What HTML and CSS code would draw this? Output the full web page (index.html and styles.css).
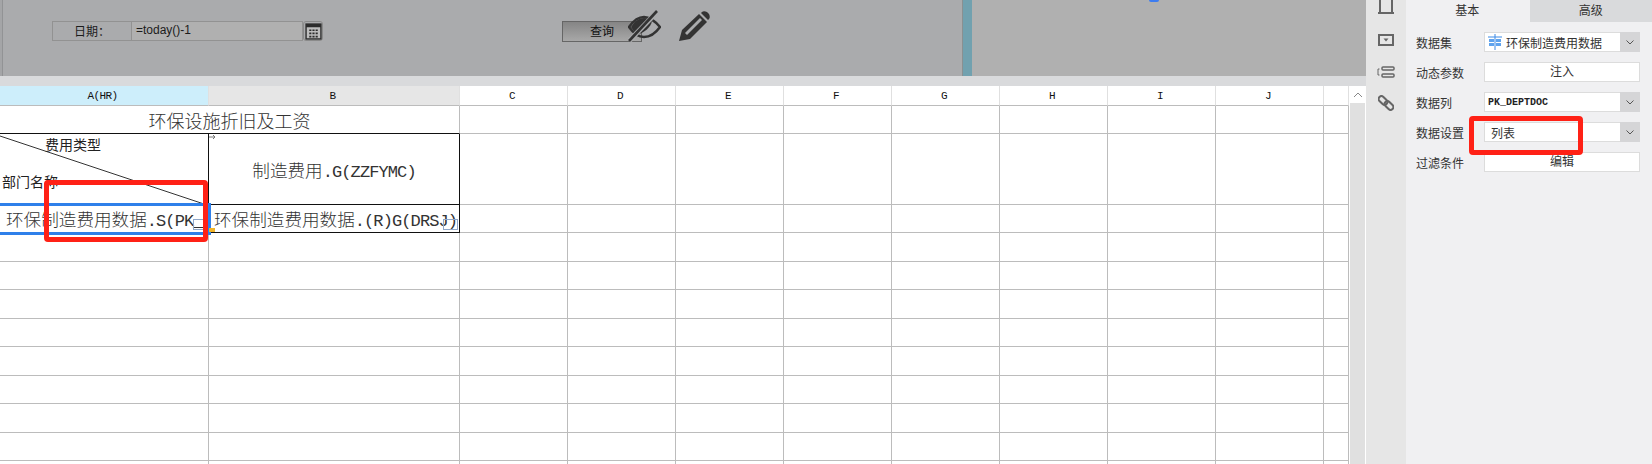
FILE: index.html
```html
<!DOCTYPE html>
<html lang="zh-CN">
<head>
  <meta charset="UTF-8">
  <title>环保设施折旧及工资</title>
  <link rel="stylesheet" href="styles.css">
</head>
<body>
  <div class="main">
    <div class="params">
      <div class="param-label">日期：</div>
      <div class="param-input">=today()-1</div>
      <div class="cal-btn">
        <svg width="17" height="17" viewBox="0 0 16 16">
          <rect x="1" y="1" width="14" height="14" fill="#bdbdbd" stroke="#2c2c2c" stroke-width="1.300"/>
          <rect x="1" y="1" width="14" height="3" fill="#2c2c2c"/>
          <path d="M4 6h2v1.600H4zM7 6h2v1.600H7zM10 6h2v1.600h-2zM4 9h2v1.600H4zM7 9h2v1.600H7zM10 9h2v1.600h-2zM4 12h2v1.600H4zM7 12h2v1.600H7zM10 12h2v1.600h-2z" fill="#2c2c2c"/>
        </svg>
      </div>
      <div class="query-btn">查询</div>
      <div class="teal-bar"></div>
      <div class="blue-dot"></div>
      <svg class="eye-icon" width="33" height="32" viewBox="0 0 33 32">
        <path d="M1 17C6 10 11 7 16 7s10 3 16 10c-5 7-10 10-16 10S6 24 1 17z" fill="none" stroke="#333" stroke-width="2.500"/>
        <path d="M3 17c4-6 8-9 13-9 3 0 6 1 8 3-1 6-8 12-14 13-3-1-5-4-7-7z" fill="#333"/>
        <path d="M1 31L29 2" stroke="#aaabad" stroke-width="5"/>
        <path d="M1 31L29 1" stroke="#333" stroke-width="2.600"/>
      </svg>
      <svg class="pencil-icon" width="31" height="31" viewBox="0 0 31 31">
        <path d="M0 30l3-11L20 3l8 8-17 17z" fill="#333"/>
        <path d="M22 2l1-1c1-1 3-1 5 0l2 2c1 2 1 4 0 5l-1 1z" fill="#333"/>
        <path d="M6 22L21 7l2 2L8 24z" fill="#aaabad"/>
      </svg>
    </div>
    <div class="band"></div>
    <div class="sheet">
      <table class="grid">
        <colgroup>
          <col class="col-a"><col class="col-b">
          <col class="col-n"><col class="col-n"><col class="col-n"><col class="col-n">
          <col class="col-n"><col class="col-n"><col class="col-n"><col class="col-n">
          <col class="col-k">
        </colgroup>
        <tr class="head">
          <th class="head-sel">A(HR)</th><th class="head-b">B</th>
          <th>C</th><th>D</th><th>E</th><th>F</th><th>G</th><th>H</th><th>I</th><th>J</th><th></th>
        </tr>
        <tr class="r28">
          <td colspan="2" class="title">环保设施折旧及工资</td>
          <td></td><td></td><td></td><td></td><td></td><td></td><td></td><td></td><td></td>
        </tr>
        <tr class="r71">
          <td class="diag-cell"></td>
          <td class="boxed data">制造费用<span class="lat">.G(ZZFYMC)</span></td>
          <td></td><td></td><td></td><td></td><td></td><td></td><td></td><td></td><td></td>
        </tr>
        <tr class="r28">
          <td class="data-a">环保制造费用数据<span class="lat">.S(PK_</span></td>
          <td class="boxed data-b">环保制造费用数据<span class="lat">.(R)G(DRSJ)</span></td>
          <td></td><td></td><td></td><td></td><td></td><td></td><td></td><td></td><td></td>
        </tr>
        <tr class="r29"><td></td><td></td><td></td><td></td><td></td><td></td><td></td><td></td><td></td><td></td><td></td></tr>
        <tr class="r28"><td></td><td></td><td></td><td></td><td></td><td></td><td></td><td></td><td></td><td></td><td></td></tr>
        <tr class="r29"><td></td><td></td><td></td><td></td><td></td><td></td><td></td><td></td><td></td><td></td><td></td></tr>
        <tr class="r28"><td></td><td></td><td></td><td></td><td></td><td></td><td></td><td></td><td></td><td></td><td></td></tr>
        <tr class="r29"><td></td><td></td><td></td><td></td><td></td><td></td><td></td><td></td><td></td><td></td><td></td></tr>
        <tr class="r28"><td></td><td></td><td></td><td></td><td></td><td></td><td></td><td></td><td></td><td></td><td></td></tr>
        <tr class="r29"><td></td><td></td><td></td><td></td><td></td><td></td><td></td><td></td><td></td><td></td><td></td></tr>
        <tr class="r28"><td></td><td></td><td></td><td></td><td></td><td></td><td></td><td></td><td></td><td></td><td></td></tr>
        <tr class="r29"><td></td><td></td><td></td><td></td><td></td><td></td><td></td><td></td><td></td><td></td><td></td></tr>
      </table>

      <svg class="diag-line" width="208" height="72" viewBox="0 0 208 72">
        <path d="M0 2L204 70" stroke="#333" stroke-width="1"/>
      </svg>
      <svg class="small-arrow" width="8" height="6" viewBox="0 0 8 6"><path d="M0 3h6M4 1l2 2-2 2" fill="none" stroke="#777"/></svg>
      <div class="diag-top">费用类型</div>
      <div class="diag-bottom">部门名称</div>
      <div class="selection"></div>
      <div class="sel-handle"></div>
      <div class="expand-box box-a"></div>
      <div class="expand-box box-b"></div>
      <div class="red-box red-cell"></div>

      <div class="scroll">
        <div class="scroll-up">
          <svg width="10" height="6" viewBox="0 0 10 6"><path d="M1 5l4-4 4 4" fill="none" stroke="#888"/></svg>
        </div>
      </div>
    </div>
  </div>

  <div class="tools">
    <svg width="16" height="15" viewBox="0 0 16 15"><path d="M2 0v13h12V0" fill="none" stroke="#666" stroke-width="2"/><path d="M0 13h3M13 13h3" stroke="#666" stroke-width="2"/></svg>
    <svg class="tool-combo" width="16" height="12" viewBox="0 0 16 12"><rect x="1" y="1" width="14" height="10" fill="none" stroke="#666" stroke-width="2"/><path d="M5.500 4.500h5L8 7.500z" fill="#666"/></svg>
    <svg class="tool-form" width="18" height="12" viewBox="0 0 18 12"><path d="M2.500 3H1v6h1.500" fill="none" stroke="#666"/><rect x="5" y="1" width="12" height="3" rx="1" fill="none" stroke="#666" stroke-width="1.500"/><rect x="5" y="8" width="12" height="3" rx="1" fill="none" stroke="#666" stroke-width="1.500"/></svg>
    <svg class="tool-link" width="16" height="16" viewBox="0 0 16 16">
      <rect x="0" y="2.700" width="10" height="5.600" rx="2.800" transform="rotate(45 5 5.500)" fill="none" stroke="#666" stroke-width="2"/>
      <rect x="6" y="7.700" width="10" height="5.600" rx="2.800" transform="rotate(45 11 10.500)" fill="none" stroke="#666" stroke-width="2"/>
    </svg>
  </div>

  <div class="panel">
    <div class="tabs">
      <div class="tab tab-on">基本</div>
      <div class="tab">高级</div>
    </div>
    <div class="form">
      <div class="form-row">
        <div class="form-label">数据集</div>
        <div class="select">
          <div class="select-val">
            <svg class="ds-icon" width="14" height="16" viewBox="0 0 14 16">
              <path d="M7 0v16" stroke="#3d8ae6"/>
              <path d="M0 3h14" stroke="#3d8ae6"/>
              <rect x="1" y="5" width="5" height="7" fill="#5fa3ee"/>
              <rect x="8" y="5" width="5" height="7" fill="#5fa3ee"/>
              <path d="M1 8.500h5M8 8.500h5" stroke="#fff"/>
            </svg>
            环保制造费用数据
          </div>
          <div class="select-arrow"><svg width="8" height="5" viewBox="0 0 8 5"><path d="M.5.500L4 4 7.500.500" fill="none" stroke="#555"/></svg></div>
        </div>
      </div>
      <div class="form-row">
        <div class="form-label">动态参数</div>
        <div class="btn">注入</div>
      </div>
      <div class="form-row">
        <div class="form-label">数据列</div>
        <div class="select">
          <div class="select-val col-name">PK_DEPTDOC</div>
          <div class="select-arrow"><svg width="8" height="5" viewBox="0 0 8 5"><path d="M.5.500L4 4 7.500.500" fill="none" stroke="#555"/></svg></div>
        </div>
      </div>
      <div class="form-row">
        <div class="form-label">数据设置</div>
        <div class="select">
          <div class="select-val list-val">列表</div>
          <div class="select-arrow"><svg width="8" height="5" viewBox="0 0 8 5"><path d="M.5.500L4 4 7.500.500" fill="none" stroke="#555"/></svg></div>
        </div>
      </div>
      <div class="form-row">
        <div class="form-label">过滤条件</div>
        <div class="btn">编辑</div>
      </div>
    </div>
  </div>

  <div class="red-box red-setting"></div>
</body>
</html>
```

FILE: styles.css
```css
* {
  box-sizing: border-box;
}

html, body {
  height: 100%;
}

body {
  margin: 0;
  display: flex;
  overflow: hidden;
  background: #fff;
  color: #222;
  font-family: "Noto Sans CJK SC", sans-serif;
  font-size: 12px;
  position: relative;
}

.main {
  width: 1366px;
  flex: none;
  display: flex;
  flex-direction: column;
}

/* top parameter bar, greyed out */
.params {
  position: relative;
  height: 76px;
  flex: none;
  display: flex;
  align-items: flex-start;
  padding: 21px 0 0 52px;
  background: linear-gradient(to right, #a4a5a7 0, #a4a5a7 2px, #929395 2px, #929395 3px, #aaabad 3px, #aaabad 962px, #b0b0b0 962px);
}

.param-label {
  width: 80px;
  height: 20px;
  border: 1px solid #929292;
  text-align: center;
  line-height: 18px;
  color: #1c1c1c;
}

.param-input {
  width: 171px;
  height: 20px;
  background: #b0b0b0;
  border: 1px solid #929292;
  border-left: 0;
  padding-left: 4px;
  font-family: "Liberation Sans", sans-serif;
  line-height: 16px;
  color: #1c1c1c;
}

.cal-btn {
  width: 20px;
  height: 20px;
  border: 1px solid #8a8a8a;
  border-radius: 3px;
  display: flex;
  align-items: center;
  justify-content: center;
}

.query-btn {
  margin-left: 239px;
  width: 80px;
  height: 21px;
  border: 1px solid #666;
  background: linear-gradient(#858585, #a8a8a8);
  text-align: center;
  line-height: 17px;
  color: #111;
}

.teal-bar {
  position: absolute;
  left: 962px;
  top: 0;
  width: 10px;
  height: 76px;
  background: #71a1af;
  border-left: 1px solid #8a9091;
}

.blue-dot {
  position: absolute;
  left: 1149px;
  top: 0;
  width: 10px;
  height: 2px;
  border-radius: 0 0 5px 5px;
  background: #3d7cf0;
}

.eye-icon {
  position: absolute;
  left: 628px;
  top: 10px;
}

.pencil-icon {
  position: absolute;
  left: 679px;
  top: 11px;
}

.band {
  height: 10px;
  flex: none;
  background: #d9dadc;
}

/* spreadsheet */
.sheet {
  position: relative;
  flex: 1;
  overflow: hidden;
}

.grid {
  border-collapse: separate;
  border-spacing: 0;
  table-layout: fixed;
  width: 1349px;
  font-size: 17.6px;
  font-weight: 300;
  color: #333;
}

.col-a { width: 209px; }
.col-b { width: 251px; }
.col-n { width: 108px; }
.col-k { width: 25px; }

.grid td, .grid th {
  padding: 0;
  border-right: 1px solid #bcbcbc;
  border-bottom: 1px solid #bcbcbc;
  white-space: nowrap;
  overflow: hidden;
}

.grid th {
  font-family: "Liberation Mono", monospace;
  font-size: 11px;
  font-weight: normal;
  letter-spacing: -0.6px;
  color: #111;
  padding-right: 3px;
  border-right-color: #e0e0e0;
}

.head { height: 20px; }
.r28 { height: 28px; }
.r29 { height: 29px; }
.r71 { height: 71px; }

.grid .head-sel { background: #cdeefb; }
.grid .head-b { background: #e6e6e6; }

.grid .title {
  text-align: center;
  border-bottom-color: #111;
  font-size: 18px;
}

.grid .diag-cell {
  border-right-color: #111;
  border-bottom-color: #111;
}

.grid .boxed {
  border-right-color: #111;
  border-bottom-color: #111;
}

.data {
  text-align: center;
}

.grid .data-a {
  padding-left: 6px;
  border-right-color: #111;
}

.grid .data-b {
  padding-left: 5px;
}

.lat {
  font-family: "Liberation Mono", monospace;
  font-size: 17px;
  font-weight: normal;
  letter-spacing: -0.9px;
}

.small-arrow {
  position: absolute;
  left: 209px;
  top: 48px;
}

.diag-line {
  position: absolute;
  left: 0;
  top: 48px;
}

.diag-top, .diag-bottom {
  position: absolute;
  font-size: 14px;
  line-height: 18px;
  color: #222;
}

.diag-top {
  left: 45px;
  top: 49px;
}

.diag-bottom {
  left: 2px;
  top: 86px;
}

.selection {
  position: absolute;
  left: -3px;
  top: 117px;
  width: 214px;
  height: 32px;
  border: 3px solid #2f80ea;
}

.sel-handle {
  position: absolute;
  left: 209px;
  top: 142px;
  width: 6px;
  height: 4px;
  background: #f0b429;
}

.expand-box {
  position: absolute;
  width: 11px;
  height: 11px;
  border: 1px solid #8fa7c9;
}

.box-a {
  left: 193px;
  top: 133px;
}

.box-b {
  left: 443px;
  top: 133px;
  width: 15px;
  height: 11px;
}

.red-box {
  position: absolute;
  border: 5px solid #ff2116;
  border-radius: 4px;
}

.red-cell {
  left: 44px;
  top: 94px;
  width: 164px;
  height: 62px;
}

.red-setting {
  left: 1469px;
  top: 116px;
  width: 114px;
  height: 39px;
}

.scroll {
  position: absolute;
  left: 1350px;
  top: 0;
  width: 15px;
  height: 100%;
  background: #e0e0e0;
}

.scroll-up {
  height: 17px;
  background: #fff;
  display: flex;
  align-items: center;
  justify-content: center;
}

/* icon strip and property panel */
.tools {
  width: 40px;
  flex: none;
  background: #e6e6e6;
  display: flex;
  flex-direction: column;
  align-items: center;
}

.tools svg {
  flex: none;
}

.tools .tool-combo { margin-top: 19px; }
.tools .tool-form { margin-top: 20px; }
.tools .tool-link { margin-top: 17px; }

.panel {
  width: 246px;
  flex: none;
  background: #f0f0f2;
}

.tabs {
  display: flex;
  height: 22px;
}

.tab {
  flex: 1;
  text-align: center;
  line-height: 19px;
  background: #d9dadc;
  color: #333;
}

.tab-on {
  background: #f0f0f2;
  margin-right: 1px;
}

.form {
  display: flex;
  flex-direction: column;
  gap: 10px;
  padding: 10px 12px 0 10px;
}

.form-row {
  display: flex;
  height: 20px;
  align-items: center;
}

.form-label {
  width: 68px;
  flex: none;
  color: #333;
}

.select {
  flex: 1;
  height: 20px;
  display: flex;
  border: 1px solid #dcdcdc;
  background: #fff;
}

.select-val {
  flex: 1;
  display: flex;
  align-items: center;
  color: #333;
  padding-left: 3px;
  gap: 4px;
}

.col-name {
  font-family: "Liberation Mono", monospace;
  font-size: 10px;
  font-weight: bold;
  color: #222;
}

.list-val {
  padding-left: 6px;
}

.select-arrow {
  width: 20px;
  margin: -1px -1px -1px 0;
  background: #d5d5d7;
  display: flex;
  align-items: center;
  justify-content: center;
}

.btn {
  flex: 1;
  height: 20px;
  border: 1px solid #dcdcdc;
  background: #fff;
  text-align: center;
  line-height: 16px;
  color: #333;
}
```
